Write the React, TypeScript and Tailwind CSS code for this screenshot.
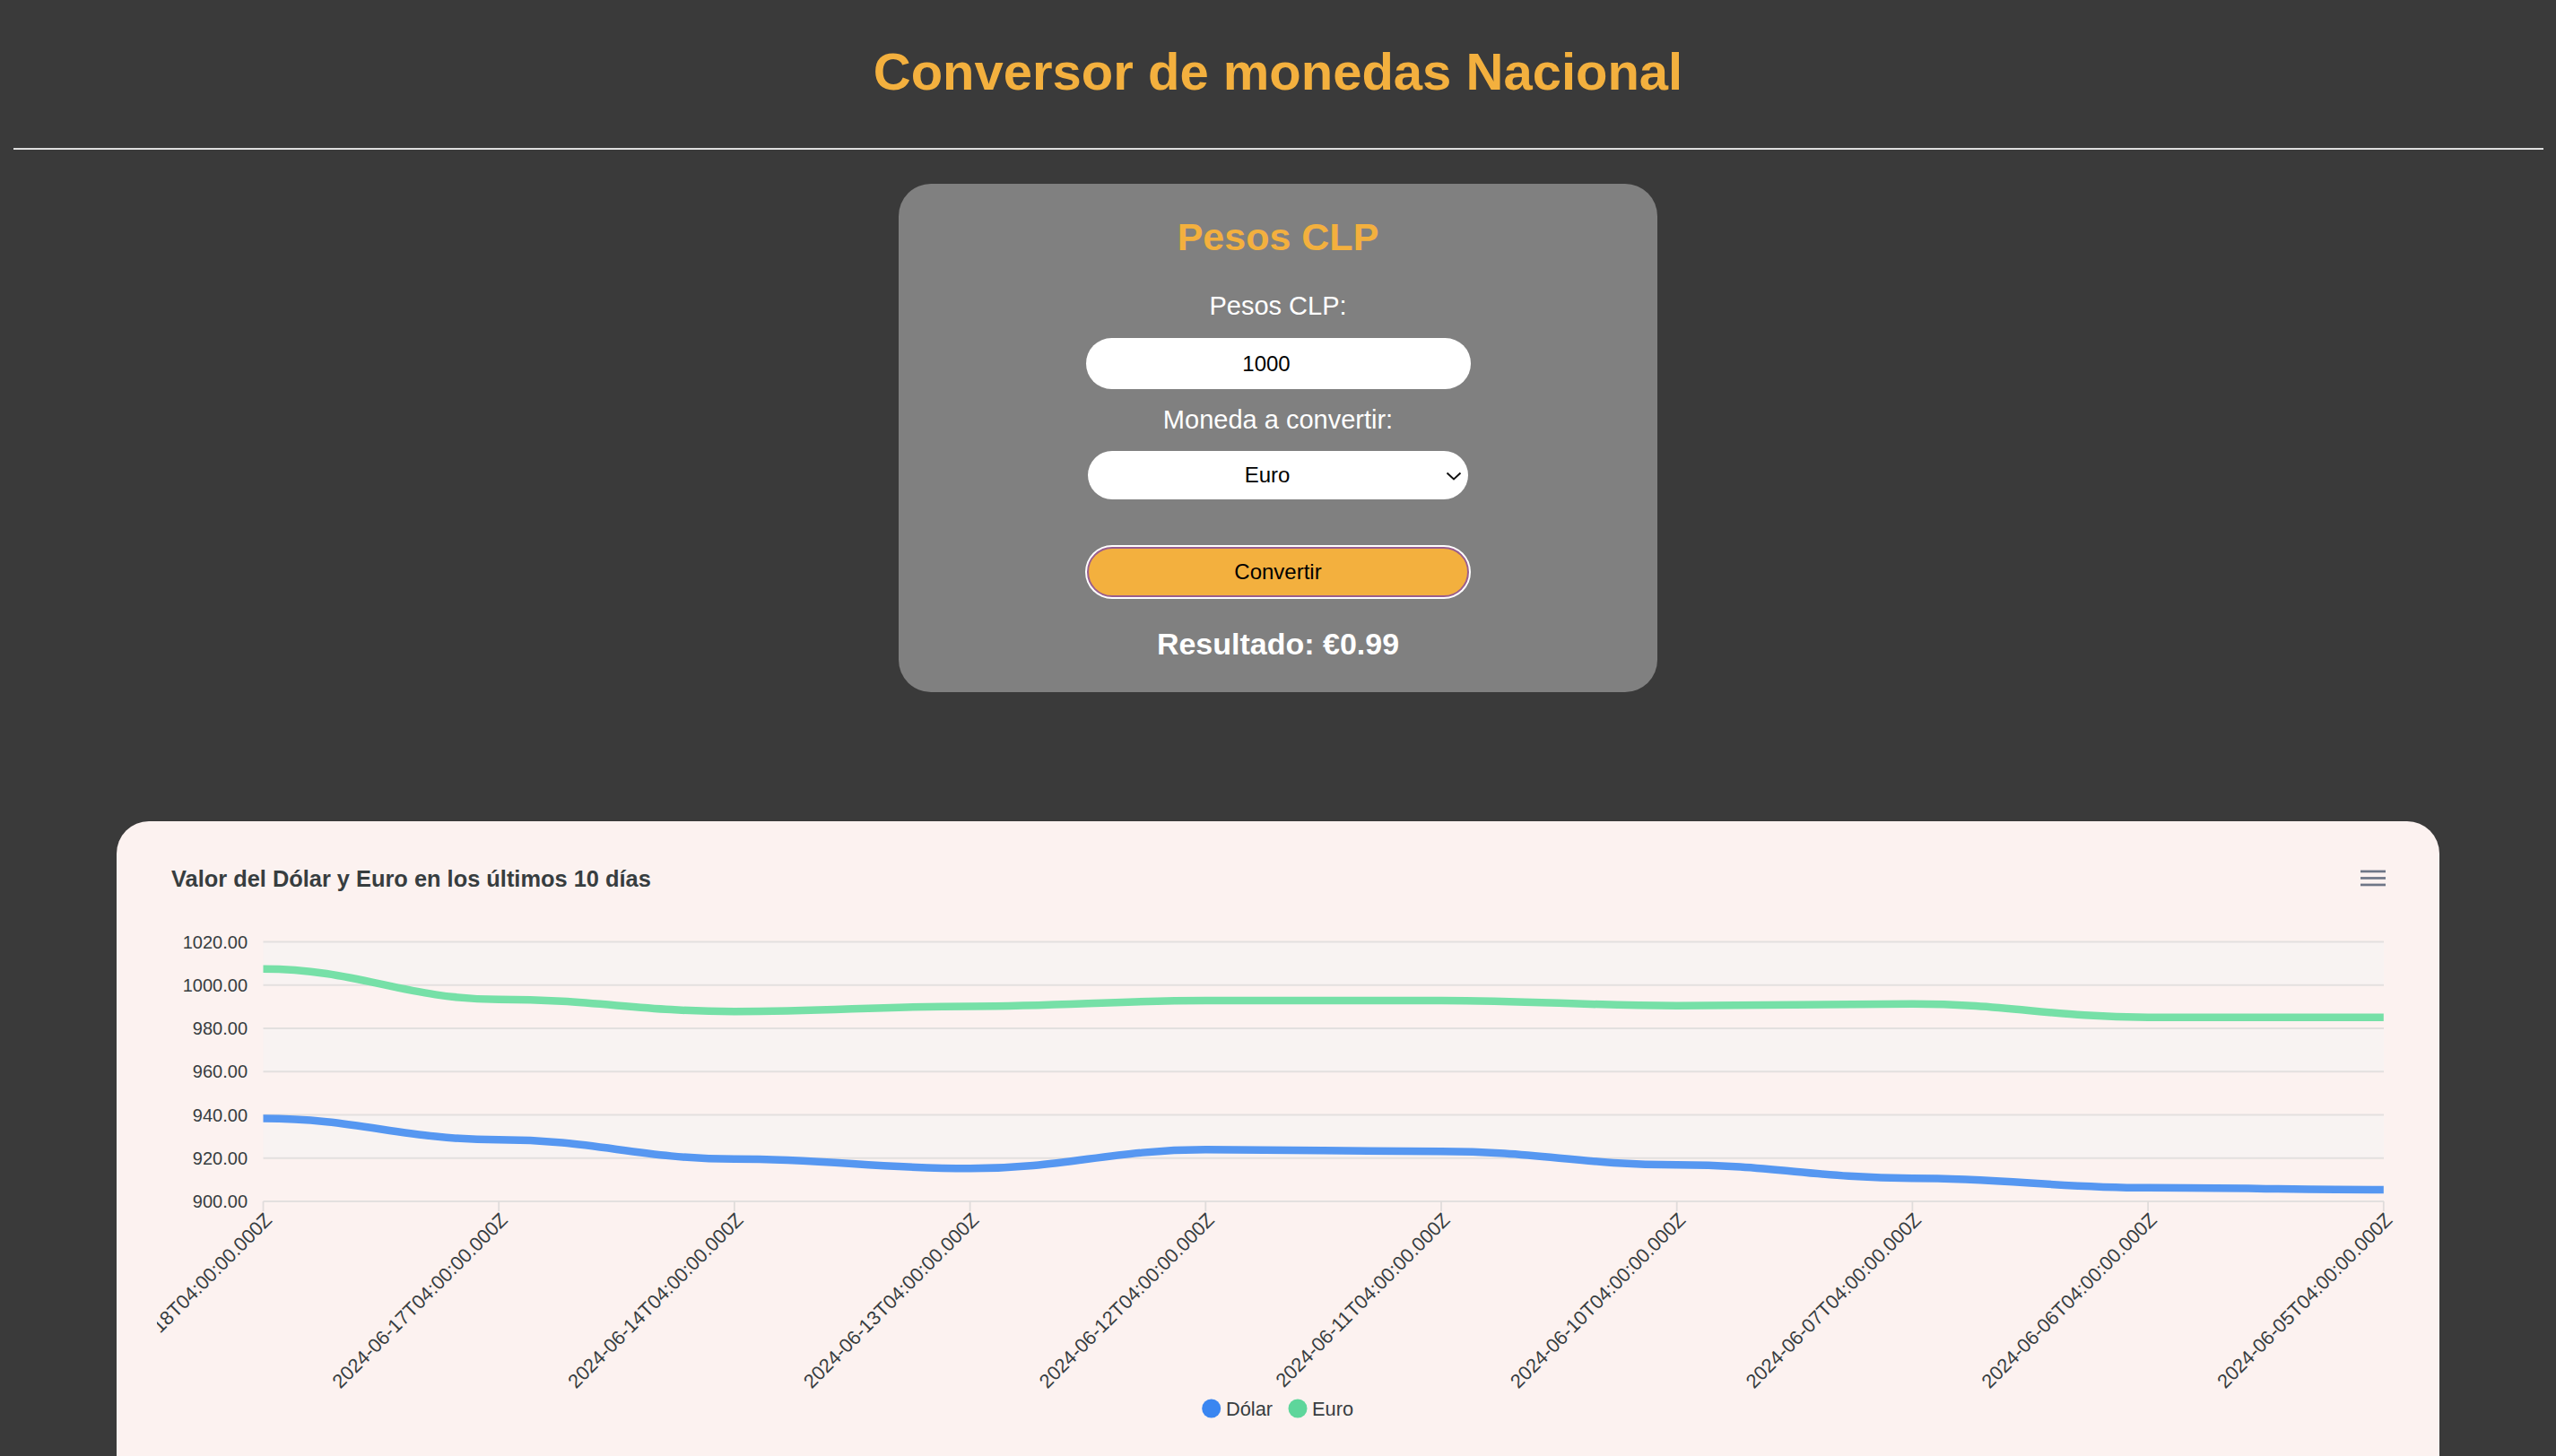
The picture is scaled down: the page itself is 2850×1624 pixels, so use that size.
import React from "react";

const OX = 175;
const OY = 1010;
const xs = Array.from({ length: 10 }, (_, i) => 293.5 + i * 262.7 - OX);
const yv = (v: number) => 1340 - (v - 900) * 2.4125 - OY;
const gridY = Array.from({ length: 7 }, (_, k) => 1050.5 + k * 48.25 - OY);
const yLabels = ["1020.00", "1000.00", "980.00", "960.00", "940.00", "920.00", "900.00"];
const dates = [
  "2024-06-18T04:00:00.000Z",
  "2024-06-17T04:00:00.000Z",
  "2024-06-14T04:00:00.000Z",
  "2024-06-13T04:00:00.000Z",
  "2024-06-12T04:00:00.000Z",
  "2024-06-11T04:00:00.000Z",
  "2024-06-10T04:00:00.000Z",
  "2024-06-07T04:00:00.000Z",
  "2024-06-06T04:00:00.000Z",
  "2024-06-05T04:00:00.000Z",
];
const euro = [1007.5, 993.4, 987.8, 990.2, 992.8, 992.9, 990.5, 991.3, 985.1, 985.1];
const dolar = [938.3, 928.5, 919.6, 915.2, 923.9, 923.1, 916.9, 910.7, 906.3, 905.4];

function buildPath(vals: number[]) {
  let d = `M${xs[0]},${yv(vals[0])}`;
  for (let i = 1; i < vals.length; i++) {
    const x0 = xs[i - 1];
    const x1 = xs[i];
    const y0 = yv(vals[i - 1]);
    const y1 = yv(vals[i]);
    const dx = x1 - x0;
    d += ` C${x0 + dx * 0.4},${y0} ${x1 - dx * 0.4},${y1} ${x1},${y1}`;
  }
  return d;
}

function Chart() {
  const plotL = 293.5 - OX;
  const plotR = 2658 - OX;
  return (
    <svg width={2517} height={600} viewBox="0 0 2517 600" className="block">
      {[0, 2, 4].map((k) => (
        <rect
          key={k}
          x={plotL}
          y={gridY[k]}
          width={plotR - plotL}
          height={48.25}
          fill="#f3f3f3"
          fillOpacity={0.5}
        />
      ))}
      {gridY.map((y, k) => (
        <line key={k} x1={plotL} x2={plotR} y1={y} y2={y} stroke="#e3e0df" strokeWidth={2} />
      ))}
      {xs.map((x, i) => (
        <line key={i} x1={x} x2={x} y1={gridY[6]} y2={gridY[6] + 11} stroke="#e0dcdb" strokeWidth={1.8} />
      ))}
      <path d={buildPath(euro)} fill="none" stroke="#76e0a7" strokeWidth={8.5} />
      <path d={buildPath(dolar)} fill="none" stroke="#5697f1" strokeWidth={8.5} />
      {gridY.map((y, k) => (
        <text
          key={k}
          x={276 - OX}
          y={y + 7}
          textAnchor="end"
          fontSize={20}
          fill="#373d3f"
          fontFamily="'Liberation Sans', Arial, sans-serif"
        >
          {yLabels[k]}
        </text>
      ))}
      {xs.map((x, i) => {
        const ex = x + 11;
        const ey = 1362 - OY;
        return (
          <text
            key={i}
            x={ex}
            y={ey}
            textAnchor="end"
            fontSize={21.8}
            fill="#373d3f"
            fontFamily="'Liberation Sans', Arial, sans-serif"
            transform={`rotate(-45 ${ex} ${ey})`}
          >
            {dates[i]}
          </text>
        );
      })}
      <circle cx={1350.7 - OX} cy={561} r={10.5} fill="#3a86f1" />
      <text x={1367 - OX} y={568.8} fontSize={21.8} fill="#373d3f" fontFamily="'Liberation Sans', Arial, sans-serif">
        Dólar
      </text>
      <circle cx={1447 - OX} cy={561} r={10.5} fill="#5ed69b" />
      <text x={1463 - OX} y={568.8} fontSize={21.8} fill="#373d3f" fontFamily="'Liberation Sans', Arial, sans-serif">
        Euro
      </text>
    </svg>
  );
}

export default function App() {
  return (
    <div className="min-h-screen bg-[#3a3a3a] px-[14.5px] font-['Liberation_Sans',Arial,sans-serif] overflow-hidden">
      <h1 className="pt-[46.4px] text-center text-[58px] leading-[67px] font-bold text-[#f3b03e]">
        Conversor de monedas Nacional
      </h1>
      <div className="mt-[51.6px] h-[2px] bg-[#dedede]" />

      <div className="mx-auto mt-[38px] flex w-[846px] flex-col items-center rounded-[36px] bg-[#808080] pt-[34px] pb-[34px]">
        <h2 className="text-[43px] leading-[50px] font-bold text-[#f3b03e]">Pesos CLP</h2>
        <label className="mt-[36.5px] text-[29px] leading-[33px] text-white">Pesos CLP:</label>
        <input
          type="text"
          defaultValue="1000"
          className="mt-[19px] h-[56.5px] w-[429px] rounded-full bg-white pr-[26px] text-center text-[24px] text-black outline-none"
        />
        <label className="mt-[18px] text-[29px] leading-[33px] text-white">Moneda a convertir:</label>
        <div className="relative mt-[18.5px] h-[54px] w-[423.5px]">
          <select
            defaultValue="EUR"
            className="h-full w-full appearance-none rounded-full bg-white pr-[24px] text-center text-[24px] text-black outline-none"
          >
            <option value="USD">Dólar</option>
            <option value="EUR">Euro</option>
          </select>
          <svg
            className="pointer-events-none absolute right-[6.5px] top-[23px]"
            width="18"
            height="10"
            viewBox="0 0 18 10"
          >
            <path d="M1.5 1.5 L9 8.5 L16.5 1.5" fill="none" stroke="#111" strokeWidth="2" />
          </svg>
        </div>
        <button className="mt-[52.5px] h-[56.5px] w-[426px] rounded-full border-2 border-[#9a5f8e] bg-[#f3b03e] text-[24px] text-black shadow-[0_0_0_2px_#ffffff]">
          Convertir
        </button>
        <h3 className="mt-[32.5px] text-[34px] leading-[39px] font-bold text-white">Resultado: €0.99</h3>
      </div>

      <div className="mx-[115.5px] mt-[144px] rounded-[36px] bg-[#fcf2f0] pt-[49.2px] pb-[80px]">
        <div className="flex items-center justify-between pl-[61px] pr-[59px]">
          <span className="text-[25.4px] leading-[30px] font-bold text-[#373d3f]">
            Valor del Dólar y Euro en los últimos 10 días
          </span>
          <svg width="30" height="22" viewBox="0 0 30 22">
            <rect x="1" y="1.6" width="28" height="2.7" fill="#6e7687" />
            <rect x="1" y="9.1" width="28" height="2.7" fill="#6e7687" />
            <rect x="1" y="16.6" width="28" height="2.7" fill="#6e7687" />
          </svg>
        </div>
        <div className="ml-[45px] mt-[14.8px]">
          <Chart />
        </div>
      </div>
    </div>
  );
}
